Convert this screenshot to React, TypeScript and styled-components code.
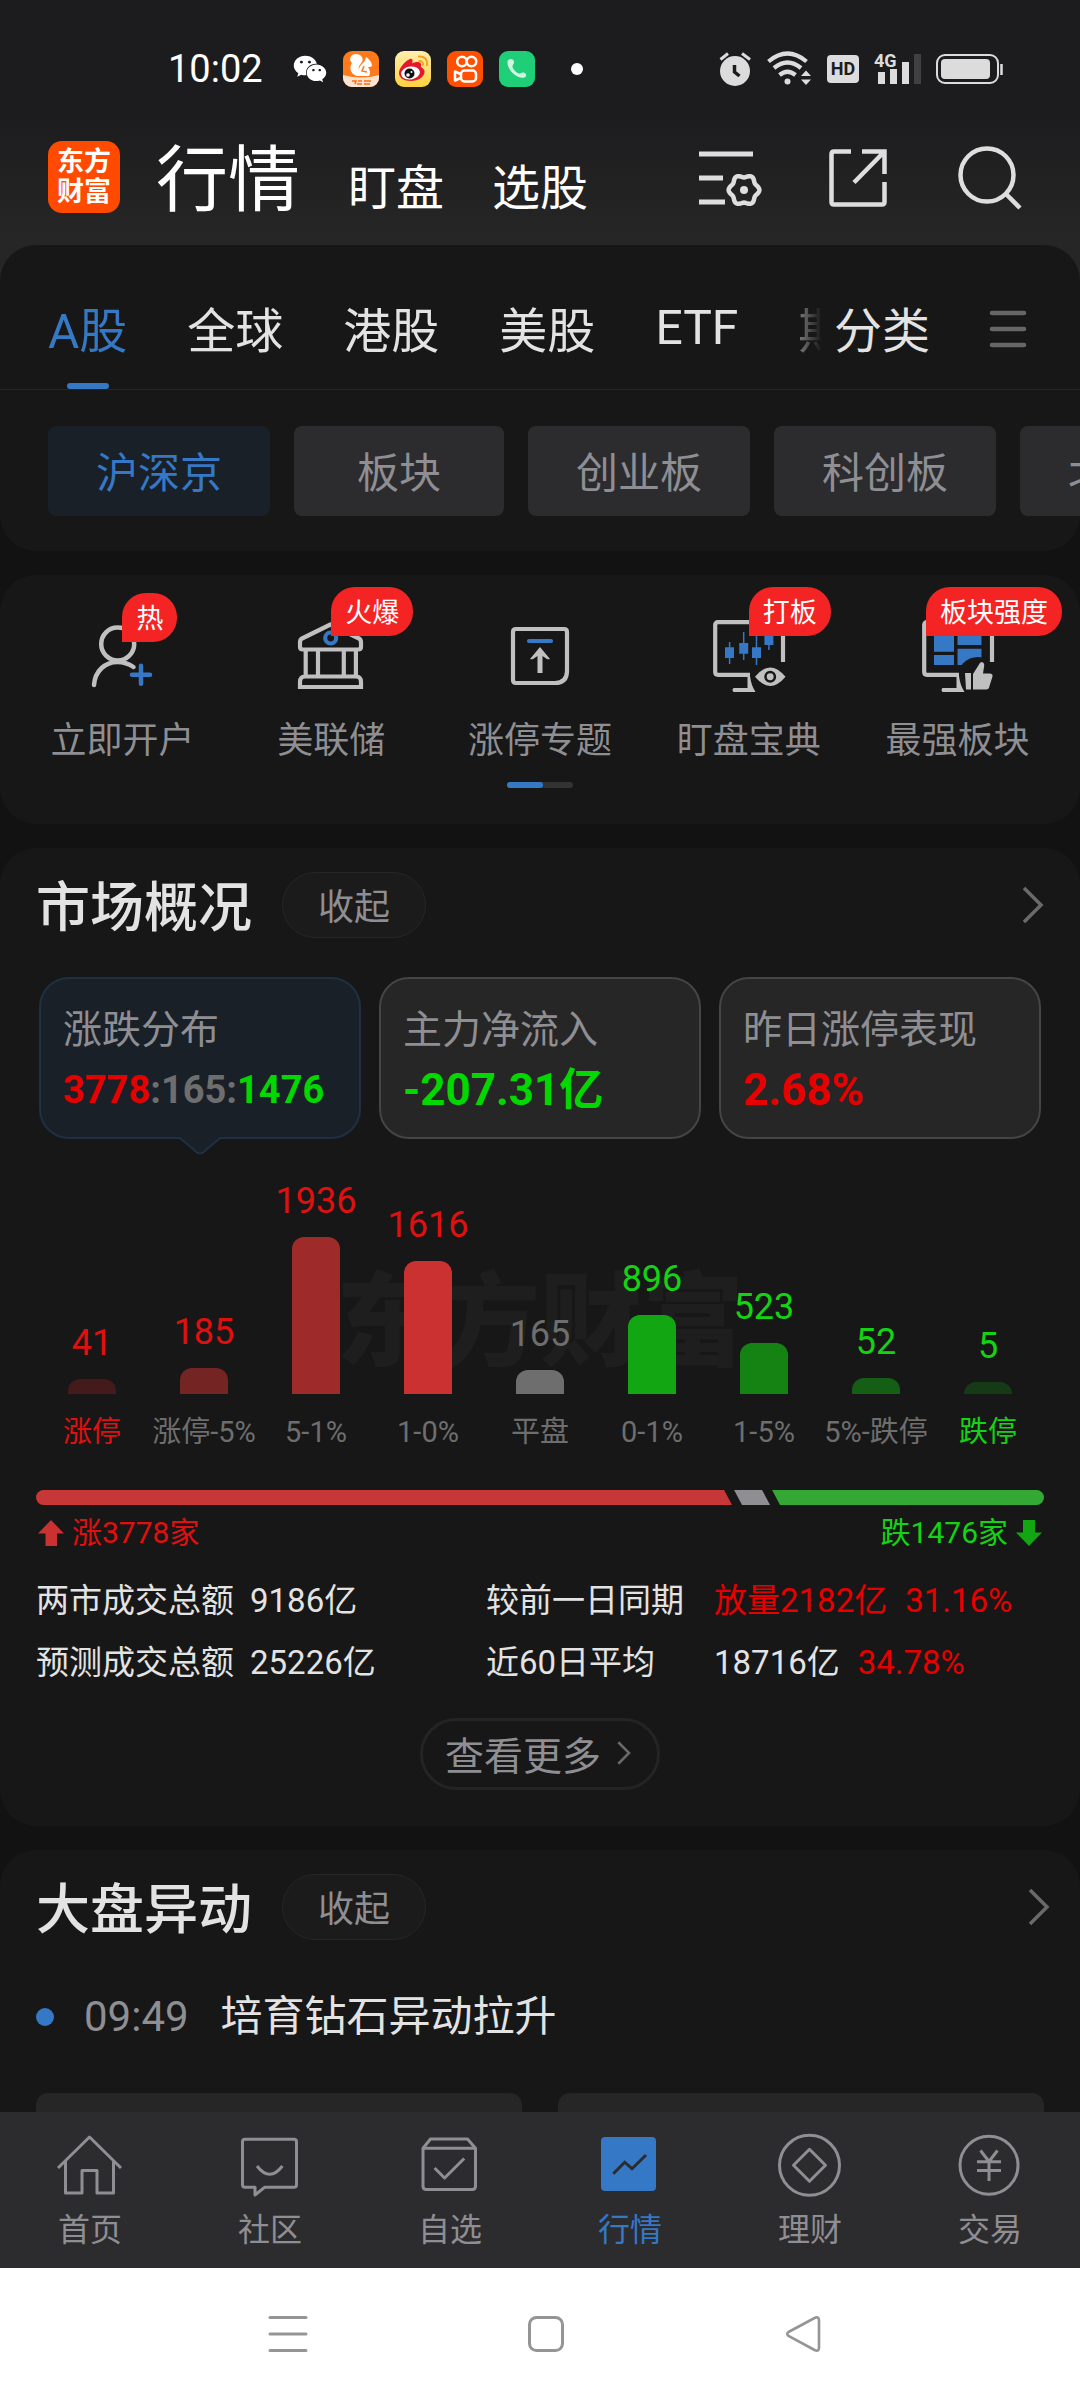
import React from "react";
import styled, { createGlobalStyle } from "styled-components";
import { FaWeixin } from "react-icons/fa";

const color = {
  page: "#121212",
  panel: "#171717",
  raised: "#262626",
  control: "#2c2c2e",
  line: "#262626",
  text: "#e3e3e3",
  muted: "#8e8e93",
  dim: "#6e6e6e",
  blue: "#3478c6",
  up: "#e60000",
  down: "#00d800",
};

const GlobalStyle = createGlobalStyle`
  * { box-sizing: border-box; }
  body {
    margin: 0;
    background: ${color.page};
    color: ${color.text};
    font-family: Roboto, "Noto Sans CJK SC", sans-serif;
  }
  button {
    margin: 0;
    padding: 0;
    border: 0;
    background: none;
    color: inherit;
    font: inherit;
    white-space: nowrap;
    cursor: pointer;
  }
  a { color: inherit; text-decoration: none; }
  svg { display: block; flex: none; overflow: visible; }
  h1, h2, p, dl, dt, dd, ul { margin: 0; padding: 0; list-style: none; font-weight: 400; }
`;

/* ---------- frame ---------- */

const Screen = styled.div`
  display: flex;
  flex-direction: column;
  height: 100vh;
`;

const Scroller = styled.div`
  flex: 1;
  min-height: 0;
  overflow: hidden auto;
  scrollbar-width: none;
`;

const TopArea = styled.div`
  background: linear-gradient(#1c1c1e 0, #1c1c1e 110px, #262626 240px, #262626 300px, ${color.page} 300px);
`;

const Panel = styled.section`
  overflow: hidden;
  margin-bottom: 24px;
  border-radius: 36px;
  background: ${color.panel};
`;

/* ---------- status bar ---------- */

const StatusBar = styled.div`
  display: flex;
  align-items: center;
  justify-content: space-between;
  height: 138px;
  padding: 0 76px 0 168px;
`;

const StatusGroup = styled.div<{ $gap: number }>`
  display: flex;
  align-items: center;
  gap: ${(p) => p.$gap}px;
  color: #dcdcdc;
`;

const Clock = styled.time`
  margin-right: 14px;
  color: #fff;
  font-size: 38px;
  line-height: 40px;
`;

const MoreDot = styled.i`
  width: 12px;
  height: 12px;
  margin-left: 20px;
  border-radius: 50%;
  background: #fff;
`;

const HdMark = styled.span`
  width: 32px;
  border-radius: 4px;
  background: #dcdcdc;
  color: #1c1c1e;
  font-size: 18px;
  font-weight: 700;
  line-height: 28px;
  text-align: center;
`;

/* ---------- title bar ---------- */

const TitleBar = styled.header`
  display: flex;
  align-items: center;
  height: 78px;
  margin-bottom: 29px;
  padding: 0 54px 0 48px;
  color: #fff;
`;

const Logo = styled.div`
  display: grid;
  place-content: center;
  width: 72px;
  height: 72px;
  margin-right: 36px;
  border-radius: 14px;
  background: #ff4a00;
  font-size: 27px;
  font-weight: 700;
  line-height: 30px;
`;

const Titles = styled.nav`
  display: flex;
  flex: 1;
  align-items: baseline;
  gap: 48px;
  padding-top: 16px;
`;

const TitleButton = styled.button<{ $large?: boolean }>`
  font-size: ${(p) => (p.$large ? 72 : 48)}px;
  line-height: 78px;
`;

const Tools = styled.div`
  display: flex;
  gap: 58px;
  color: #dedede;
`;

/* ---------- market tabs ---------- */

const TabRow = styled.div`
  display: flex;
  align-items: center;
  height: 145px;
  padding: 24px 54px 0 48px;
  border-bottom: 1px solid ${color.line};
`;

const TabScroller = styled.div`
  display: flex;
  flex: 1;
  gap: 60px;
  min-width: 0;
  height: 100%;
  overflow: hidden;
  mask-image: linear-gradient(to right, #000 calc(100% - 48px), transparent);
`;

const Tab = styled.button<{ $active?: boolean }>`
  position: relative;
  padding-bottom: 4px;
  color: ${(p) => (p.$active ? color.blue : "inherit")};
  font-size: 48px;

  &::after {
    content: "";
    position: absolute;
    bottom: 0;
    left: calc(50% - 21px);
    width: 42px;
    height: 6px;
    border-radius: 3px;
    background: ${(p) => (p.$active ? color.blue : "transparent")};
  }
`;

const CategoryTab = styled(Tab)`
  margin: 0 60px 0 12px;
`;

const Pills = styled.div`
  display: flex;
  gap: 24px;
  padding: 36px 0 35px 48px;
  overflow: hidden;
`;

const Pill = styled.button<{ $active?: boolean }>`
  flex: none;
  min-width: 210px;
  height: 90px;
  padding: 0 48px 4px;
  border-radius: 8px;
  background: ${(p) => (p.$active ? "#1a2028" : color.control)};
  color: ${(p) => (p.$active ? color.blue : color.muted)};
  font-size: 42px;
`;

/* ---------- shortcuts ---------- */

const Shortcuts = styled.div`
  display: grid;
  grid-template-columns: repeat(5, 1fr);
  padding: 45px 18px 0;
`;

const Shortcut = styled.a`
  position: relative;
  display: flex;
  flex-direction: column;
  align-items: center;
  gap: 25px;
  color: ${color.muted};
  font-size: 36px;
  line-height: 48px;
  white-space: nowrap;
`;

const Badge = styled.span<{ $low?: boolean; $wide?: boolean }>`
  position: absolute;
  top: ${(p) => (p.$low ? -27 : -33)}px;
  ${(p) => (p.$wide ? "right: 0;" : "left: 50%;")}
  padding: 3px 14px 0;
  border-radius: 24px 24px 24px 0;
  background: #f52424;
  color: #fff;
  font-size: 27px;
  line-height: 46px;
`;

const Pager = styled.div`
  width: 66px;
  height: 6px;
  margin: 17px auto 36px;
  border-radius: 3px;
  background: #333;

  &::before {
    content: "";
    display: block;
    width: 36px;
    height: 6px;
    border-radius: 3px;
    background: ${color.blue};
  }
`;

/* ---------- section heading ---------- */

const SectionHead = styled.header<{ $end: number }>`
  display: flex;
  align-items: center;
  height: 66px;
  margin: 24px ${(p) => p.$end}px 0 36px;
`;

const SectionTitle = styled.h2`
  margin-right: 30px;
  padding-top: 8px;
  font-size: 54px;
  font-weight: 500;
  line-height: 66px;
`;

const FoldButton = styled.button`
  width: 144px;
  height: 66px;
  margin-right: auto;
  padding-bottom: 2px;
  border: 1px solid ${color.line};
  border-radius: 33px;
  background: #1b1b1b;
  color: ${color.muted};
  font-size: 36px;
`;

/* ---------- overview cards ---------- */

const Cards = styled.div`
  display: grid;
  grid-template-columns: repeat(3, 1fr);
  gap: 18px;
  margin: 39px 39px 0;
`;

const Card = styled.button<{ $active?: boolean }>`
  position: relative;
  height: 162px;
  padding: 4px 22px 0;
  border: 2px solid ${(p) => (p.$active ? "#1f3044" : "#454547")};
  border-radius: 30px;
  background: ${(p) => (p.$active ? "#1a2028" : color.raised)};
  text-align: left;
`;

const CardArrow = styled.svg`
  position: absolute;
  top: 100%;
  left: calc(50% - 20px);
`;

const CardLabel = styled.span`
  display: block;
  color: ${color.muted};
  font-size: 39px;
  line-height: 60px;
`;

const CardValue = styled.strong<{ $small?: boolean }>`
  display: block;
  font-size: ${(p) => (p.$small ? 38 : 44)}px;
  font-weight: 700;
  line-height: 60px;
`;

const Tone = styled.span<{ $tone: "up" | "down" | "flat" }>`
  color: ${(p) => (p.$tone === "up" ? color.up : p.$tone === "down" ? color.down : color.dim)};
`;

/* ---------- distribution chart ---------- */

const Chart = styled.div`
  position: relative;
  display: grid;
  grid-template-columns: repeat(9, 1fr);
  height: 314px;
  margin: 0 36px;
`;

const Watermark = styled.span`
  position: absolute;
  inset: 124px 0 auto;
  color: #1e1e1e;
  font-size: 102px;
  font-weight: 900;
  line-height: 120px;
  text-align: center;
`;

const Column = styled.div`
  position: relative;
  display: flex;
  flex-direction: column;
  align-items: center;
  justify-content: flex-end;
  white-space: nowrap;
`;

const ColumnValue = styled.span<{ $color: string }>`
  margin-bottom: 15px;
  color: ${(p) => p.$color};
  font-size: 36px;
  line-height: 42px;
`;

const Bar = styled.div<{ $color: string }>`
  width: 48px;
  border-radius: 12px 12px 0 0;
  background: ${(p) => p.$color};
`;

const ColumnLabel = styled.span<{ $color: string }>`
  margin-top: 17px;
  color: ${(p) => p.$color};
  font-size: 29px;
  line-height: 42px;
`;

/* ---------- up / down ratio ---------- */

const Ratio = styled.div`
  display: flex;
  gap: 2px;
  height: 15px;
  margin: 37px 36px 0;
  overflow: hidden;
  border-radius: 8px;
`;

const RatioPart = styled.i<{ $color: string; $shape: string }>`
  min-width: 36px;
  background: ${(p) => p.$color};
  clip-path: polygon(${(p) => p.$shape});
`;

const RatioLegend = styled.div`
  display: flex;
  justify-content: space-between;
  margin: 6px 36px 0;
  font-size: 30px;
  line-height: 44px;
`;

const LegendItem = styled.span<{ $color: string }>`
  display: flex;
  align-items: center;
  gap: 7px;
  color: ${(p) => p.$color};
`;

/* ---------- turnover figures ---------- */

const Figures = styled.dl`
  display: grid;
  grid-template-columns: 214fr 236fr 228fr 330fr;
  margin: 15px 36px 0;
  font-size: 33px;
  line-height: 62px;
  white-space: nowrap;
`;

const FigureValue = styled.dd`
  display: flex;
  gap: 18px;
`;

const MoreButton = styled.button`
  display: flex;
  align-items: center;
  justify-content: center;
  gap: 16px;
  width: 240px;
  height: 72px;
  margin: 24px auto 36px;
  padding: 0 4px 3px 0;
  border: 3px solid #242424;
  border-radius: 36px;
  color: ${color.muted};
  font-size: 39px;
`;

/* ---------- market moves ---------- */

const NewsLine = styled.p`
  display: flex;
  align-items: center;
  margin: 45px 36px 0;
  font-size: 42px;
  line-height: 64px;
`;

const NewsDot = styled.i`
  width: 18px;
  height: 18px;
  margin-right: 30px;
  border-radius: 50%;
  background: ${color.blue};
`;

const NewsTime = styled.time`
  margin-right: 32px;
  color: ${color.muted};
`;

const NewsCards = styled.div`
  display: grid;
  grid-template-columns: 1fr 1fr;
  gap: 36px;
  margin: 44px 36px 36px;
`;

const NewsCard = styled.div`
  height: 150px;
  border-radius: 12px;
  background: ${color.raised};
`;

/* ---------- bottom bars ---------- */

const BottomNav = styled.nav`
  display: grid;
  flex: none;
  grid-template-columns: repeat(6, 1fr);
  height: 156px;
  padding-top: 17px;
  background: ${color.control};
`;

const BottomLink = styled.a<{ $active?: boolean }>`
  display: flex;
  flex-direction: column;
  align-items: center;
  gap: 7px;
  color: ${(p) => (p.$active ? color.blue : color.muted)};
  font-size: 32px;
  line-height: 44px;
`;

const SystemNav = styled.div`
  display: flex;
  flex: none;
  align-items: center;
  justify-content: center;
  gap: 216px;
  height: 132px;
  padding-left: 12px;
  background: #fff;
  color: #959595;
`;

/* ---------- icons ---------- */

const stroke = (width: number) => ({
  fill: "none",
  stroke: "currentColor",
  strokeWidth: width,
});

const AlarmIcon = () => (
  <svg width="32" height="36" viewBox="60 21 32 36">
    <circle cx="76" cy="41" r="15" fill="currentColor" />
    <path d="M61.5 29.5 69 23.5M83 23.5l8 6" {...stroke(3)} />
    <path d="M75.5 35v7l5 4" fill="none" stroke="#1c1c1e" strokeWidth="3.5" />
  </svg>
);

const WifiIcon = () => (
  <svg width="46" height="36" viewBox="107 21 46 36">
    <path d="M109.5 31.5q19-16 38 0M115 38q13.500-11 27 0M120.500 45q8-6.500 16 0" {...stroke(4.2)} />
    <circle cx="128.500" cy="51.500" r="3" fill="currentColor" />
    <path d="m142 46 5-5.500 5 5.500zM142 49.500h10l-5 5.500z" fill="currentColor" />
  </svg>
);

const SignalIcon = () => (
  <svg width="47" height="36" viewBox="213 21 47 36">
    <path d="M217 42h7v12h-7zM229 39h7v15h-7zM241 32h7v22h-7z" fill="currentColor" />
    <path d="M253 24h7v30h-7z" fill="#404042" />
    <text x="213" y="37" fontSize="18" fontWeight="700" fill="currentColor">
      4G
    </text>
  </svg>
);

const BatteryIcon = () => (
  <svg width="68" height="36" viewBox="276 21 68 36">
    <rect x="277" y="25" width="61" height="28" rx="8" {...stroke(2)} />
    <rect x="281" y="29" width="49" height="20" rx="4" fill="currentColor" />
    <path d="M341.500 34v11" {...stroke(2.5)} />
  </svg>
);

const BrowserAppIcon = () => (
  <svg width="36" height="36" viewBox="0 0 36 36">
    <rect width="36" height="36" rx="9" fill="#ff7a1a" />
    <path d="M0 24q18 5 36 0v3a9 9 0 0 1-9 9H9a9 9 0 0 1-9-9z" fill="#ffe2cf" />
    <path d="M9 12C5 8 8 3 13 3s8 4 6 8c-2 3-5 5-2 10 2 3 5 3 6 4H14C7 23 6 16 9 12z" fill="#fff" />
    <path d="M19 13c2-2 3-3 4-7 3 2 5 4 6 8 0 2-2 2-4 2 2 3 3 6 1 9h-8c-4-4-2-9 1-12z" fill="#fff" />
    <path d="m21 15-2 5 5 1" fill="none" stroke="#ff7a1a" strokeWidth="1.500" />
    <path d="M9 30h4l-1 3M15 30h4M14 33h5M21 30h7M21 33h6" stroke="#ff6a10" strokeWidth="1.500" fill="none" />
  </svg>
);

const WeiboAppIcon = () => (
  <svg width="36" height="36" viewBox="0 0 36 36">
    <defs>
      <linearGradient id="weibo" x2="0" y2="1">
        <stop stopColor="#ffeeb0" />
        <stop offset="1" stopColor="#ffd23c" />
      </linearGradient>
    </defs>
    <rect width="36" height="36" rx="9" fill="url(#weibo)" />
    <path d="M4 22C4 17 10 10 15 8c3-1 3 3 2 4.500 4-2.500 10-2 9 2-1 2 3 2.500 3.500 5.500C30 26 23 30 16 30S4 27 4 22z" fill="#e6162d" />
    <ellipse cx="15.500" cy="22" rx="9.500" ry="6.500" fill="#fff" transform="rotate(-8 15.500 22)" />
    <circle cx="14.500" cy="22.500" r="5" fill="#111" />
    <circle cx="13" cy="24" r="1.800" fill="#fff" />
    <circle cx="16.500" cy="21" r="1" fill="#fff" />
    <path d="M23 5.500q10-1 9 9.500M23.500 10q5-.5 4.500 4.500" fill="none" stroke="#f5a31a" strokeWidth="2" />
  </svg>
);

const VideoAppIcon = () => (
  <svg width="36" height="36" viewBox="0 0 36 36">
    <rect width="36" height="36" rx="9" fill="#ff4f00" />
    <g fill="none" stroke="#fff" strokeWidth="2.500" strokeLinejoin="round">
      <circle cx="15" cy="10.500" r="4.800" />
      <circle cx="24.500" cy="10.500" r="4.800" />
      <rect x="14" y="19.500" width="15" height="11" rx="3.500" />
      <path d="m13.500 23-5.500-2.500v9l5.500-2.500" />
    </g>
  </svg>
);

const PhoneAppIcon = () => (
  <svg width="36" height="36" viewBox="0 0 36 36">
    <rect width="36" height="36" rx="9" fill="#1fcf78" />
    <path
      d="M10 8.500c2-1.500 5 0 5 2.500s-2 3-1.500 5c1 3 3 5 6 6.500 2 .5 3-1.500 5-1 3 .5 3.500 4 1 5C18 28.500 8 19 8.500 11c0-1 .5-2 1.500-2.500z"
      fill="#d2f5e2"
    />
  </svg>
);

const gearPath =
  Array.from({ length: 73 }, (_, i) => {
    const angle = (i * Math.PI) / 36;
    const radius = 14 + 1.4 * Math.cos(6 * angle);
    const x = 84 + radius * Math.cos(angle);
    const y = 159 + radius * Math.sin(angle);
    return `${i ? "L" : "M"}${x.toFixed(2)} ${y.toFixed(2)}`;
  }).join("") + "z";

const ListSettingsIcon = () => (
  <svg width="72" height="72" viewBox="34 110 72 72">
    <path d="M39 123h54M39 147h24M39 171h26" {...stroke(5)} />
    <path d={gearPath} {...stroke(4.5)} />
    <circle cx="84" cy="159" r="4" fill="currentColor" />
  </svg>
);

const ShareIcon = () => (
  <svg width="72" height="72" viewBox="164 110 72 72">
    <path d="M191 120.500h-17q-2.500 0-2.500 2.500v48q0 2.500 2.500 2.500h48q2.500 0 2.500-2.500v-20" {...stroke(4.5)} />
    <path d="M202 120.500h22.500V143M224 121l-30 30.500" {...stroke(4.5)} />
  </svg>
);

const SearchIcon = () => (
  <svg width="72" height="72" viewBox="294 110 72 72">
    <circle cx="327" cy="144" r="26.500" {...stroke(4.5)} />
    <path d="m346 163 14 14" {...stroke(4.5)} />
  </svg>
);

const CategoryIcon = () => (
  <svg width="36" height="38" viewBox="0 0 36 38" color="#666">
    <path d="M2 3h32M2 19h32M2 35h32" {...stroke(4.5)} strokeLinecap="round" />
  </svg>
);

const Chevron = ({ small }: { small?: boolean }) => (
  <svg width={small ? 14 : 22} height={small ? 24 : 38} viewBox="0 0 22 38" color="#6a6a6c">
    <path d="m2 2 17 17L2 36" {...stroke(small ? 4 : 3.5)} />
  </svg>
);

const light = "#c0c0c0";

const OpenAccountIcon = () => (
  <svg width="72" height="72" viewBox="0 0 72 72" color={light}>
    <circle cx="31.700" cy="24" r="16.500" {...stroke(4.5)} />
    <path d="M8 65c1-14 11-23 23.500-23 6 0 11.500 2 16 5" {...stroke(4.5)} strokeLinecap="round" />
    <path d="M46 54.700h18M55 45.700v18" {...stroke(4.5)} stroke={color.blue} strokeLinecap="round" />
  </svg>
);

const BankIcon = () => (
  <svg width="72" height="72" viewBox="0 0 72 72" color={light}>
    <g {...stroke(4.2)}>
      <path d="M35.500 4.500 7 18.500q-2 1-2 4V27q0 2.500 3 2.500h55q3 0 3-2.500v-4.500q0-3-2-4z" />
      <path d="M10.700 30v26M23 30v26M48.800 30v26M60.900 30v26" />
      <path d="M5 67v-5q0-5.500 5-5.500h51q5 0 5 5.500v5z" />
    </g>
    <circle cx="35.700" cy="18" r="5.500" {...stroke(4.2)} stroke={color.blue} />
  </svg>
);

const LimitUpIcon = () => (
  <svg width="72" height="72" viewBox="0 0 72 72" color={light}>
    <path d="M12 9h48q3 0 3 3v39q0 12-12 12H12q-3 0-3-3V12q0-3 3-3z" {...stroke(4.2)} />
    <path d="M25 21h22" {...stroke(4.2)} stroke={color.blue} strokeLinecap="round" />
    <path d="M36 27 46 39q-1.500.5-3 0l-4.500-3v17h-5V36L29 39q-1.500.5-3 0z" fill="currentColor" />
  </svg>
);

const MonitorFrame = () => (
  <>
    <path d="M70 42V5q0-2.800-3-2.800H5Q2.200 2.200 2.200 5v47q0 2.800 2.800 2.800h32" {...stroke(4.2)} />
    <path d="M34.500 56h2.500q1 9 5.500 16H20.500q-2-2 0-4H34.500z" fill="currentColor" />
  </>
);

const WatchGuideIcon = () => (
  <svg width="72" height="72" viewBox="0 0 72 72" color={light}>
    <MonitorFrame />
    <path d="M16.600 22v22M30.700 12v28M43.500 16v29M55.900 8v22" {...stroke(1.5)} stroke={color.blue} />
    <path d="M12 27.300h9V38h-9zM26.200 23h9v10.700h-9zM39 27.300h9V38h-9zM51.400 14h9v11h-9z" fill={color.blue} />
    <path d="M42 56.700q15-18.500 30.500 0-15.500 18.500-30.500 0z" fill="currentColor" />
    <circle cx="57.200" cy="56.700" r="4.700" fill="currentColor" stroke={color.panel} strokeWidth="2.500" />
  </svg>
);

const StrongSectorIcon = () => (
  <svg width="72" height="72" viewBox="0 0 72 72" color={light}>
    <path
      d="M12 12h20v19.700H12zM35.500 12h24v13h-24zM12 35h20v10H12zM35.500 28.700h24V45h-24z"
      fill={color.blue}
    />
    <circle cx="56" cy="58" r="21" fill={color.panel} />
    <MonitorFrame />
    <path
      d="M43 53h6v16.500h-5zM51 69.500V54l6-9.500q.5-2.500 3-2.500 3 1 2 5l-1 6.500h6.500q3.500 0 3 3L67.500 66q-.5 3.500-3.500 3.500z"
      fill="currentColor"
    />
  </svg>
);

const HomeIcon = () => (
  <svg width="72" height="72" viewBox="0 0 72 72">
    <path d="m4 39 31.500-31L67 39M11.500 32.500V64H28V41.500h15V64h16.500V32.500" {...stroke(3)} strokeLinejoin="round" />
  </svg>
);

const CommunityIcon = () => (
  <svg width="72" height="72" viewBox="0 0 72 72">
    <path
      d="M11 10.300h49q2.500 0 2.500 2.500v43q0 2.500-2.500 2.500H30.500L21 66v-7.700H11q-2.500 0-2.500-2.500v-43q0-2.500 2.500-2.500z"
      {...stroke(3)}
      strokeLinejoin="round"
    />
    <path d="M23 37q12.700 16.500 25.400 0" {...stroke(3)} />
  </svg>
);

const WatchlistIcon = () => (
  <svg width="72" height="72" viewBox="0 0 72 72">
    <path d="M9 19.300 16.500 10h37l8 9.300v38q0 3.200-3.200 3.200H12.200Q9 60.500 9 57.300zH61.500M20.600 39l10 10 19.600-19.500" {...stroke(3)} strokeLinejoin="round" />
  </svg>
);

const MarketIcon = () => (
  <svg width="72" height="72" viewBox="0 0 72 72">
    <rect x="7" y="8" width="55" height="54" rx="4" fill="currentColor" />
    <path d="m19.300 44.700 11.400-11.500 7.300 6.500L52 26" fill="none" stroke={color.control} strokeWidth="3" />
  </svg>
);

const WealthIcon = () => (
  <svg width="72" height="72" viewBox="0 0 72 72">
    <circle cx="35.500" cy="36.300" r="30" {...stroke(3)} />
    <path d="m35.500 20.300 16 16-16 16-16-16z" {...stroke(3)} strokeLinejoin="round" />
  </svg>
);

const TradeIcon = () => (
  <svg width="72" height="72" viewBox="0 0 72 72">
    <circle cx="35" cy="36.300" r="29" {...stroke(3)} />
    <path d="m26.500 21.500 8.500 11 8.500-11M35 32v20M23 32.700h24M23 41.500h24" {...stroke(3)} />
  </svg>
);

/* ---------- data ---------- */

const tabs = ["A股", "全球", "港股", "美股", "ETF", "期货"];
const pills = ["沪深京", "板块", "创业板", "科创板", "北交所"];

const shortcuts = [
  { name: "立即开户", badge: "热", icon: <OpenAccountIcon /> },
  { name: "美联储", badge: "火爆", icon: <BankIcon /> },
  { name: "涨停专题", badge: "", icon: <LimitUpIcon /> },
  { name: "盯盘宝典", badge: "打板", icon: <WatchGuideIcon /> },
  { name: "最强板块", badge: "板块强度", icon: <StrongSectorIcon /> },
];

const red = "#e01010";
const green = "#14d214";

const columns = [
  { label: "涨停", value: 41, height: 15, bar: "#451a1a", tone: red, labelTone: red },
  { label: "涨停-5%", value: 185, height: 26, bar: "#752424", tone: red, labelTone: color.dim },
  { label: "5-1%", value: 1936, height: 157, bar: "#9f2a2a", tone: red, labelTone: color.dim },
  { label: "1-0%", value: 1616, height: 133, bar: "#cc3131", tone: red, labelTone: color.dim },
  { label: "平盘", value: 165, height: 24, bar: "#6e6e6e", tone: color.dim, labelTone: color.dim },
  { label: "0-1%", value: 896, height: 79, bar: "#12a712", tone: green, labelTone: color.dim },
  { label: "1-5%", value: 523, height: 51, bar: "#148314", tone: green, labelTone: color.dim },
  { label: "5%-跌停", value: 52, height: 16, bar: "#155e15", tone: green, labelTone: color.dim },
  { label: "跌停", value: 5, height: 12, bar: "#163a16", tone: green, labelTone: green },
];

const bottomItems = [
  { name: "首页", icon: <HomeIcon /> },
  { name: "社区", icon: <CommunityIcon /> },
  { name: "自选", icon: <WatchlistIcon /> },
  { name: "行情", icon: <MarketIcon />, active: true },
  { name: "理财", icon: <WealthIcon /> },
  { name: "交易", icon: <TradeIcon /> },
];

export default function App() {
  return (
    <>
      <GlobalStyle />
      <Screen>
        <Scroller>
          <TopArea>
            <StatusBar>
              <StatusGroup $gap={16}>
                <Clock>10:02</Clock>
                <FaWeixin size={34} color="#fff" />
                <BrowserAppIcon />
                <WeiboAppIcon />
                <VideoAppIcon />
                <PhoneAppIcon />
                <MoreDot />
              </StatusGroup>
              <StatusGroup $gap={15}>
                <AlarmIcon />
                <WifiIcon />
                <HdMark>HD</HdMark>
                <SignalIcon />
                <BatteryIcon />
              </StatusGroup>
            </StatusBar>

            <TitleBar>
              <Logo>
                <span>东方</span>
                <span>财富</span>
              </Logo>
              <Titles>
                <TitleButton $large>行情</TitleButton>
                <TitleButton>盯盘</TitleButton>
                <TitleButton>选股</TitleButton>
              </Titles>
              <Tools>
                <button aria-label="设置">
                  <ListSettingsIcon />
                </button>
                <button aria-label="分享">
                  <ShareIcon />
                </button>
                <button aria-label="搜索">
                  <SearchIcon />
                </button>
              </Tools>
            </TitleBar>

            <Panel>
              <TabRow>
                <TabScroller>
                  {tabs.map((name, i) => (
                    <Tab key={name} $active={i === 0}>
                      {name}
                    </Tab>
                  ))}
                </TabScroller>
                <CategoryTab>分类</CategoryTab>
                <button aria-label="全部分类">
                  <CategoryIcon />
                </button>
              </TabRow>
              <Pills>
                {pills.map((name, i) => (
                  <Pill key={name} $active={i === 0}>
                    {name}
                  </Pill>
                ))}
              </Pills>
            </Panel>
          </TopArea>

          <Panel>
            <Shortcuts>
              {shortcuts.map((s) => (
                <Shortcut key={s.name} href="#">
                  {s.icon}
                  {s.name}
                  {s.badge && (
                    <Badge $low={s.badge.length === 1} $wide={s.badge.length > 2}>
                      {s.badge}
                    </Badge>
                  )}
                </Shortcut>
              ))}
            </Shortcuts>
            <Pager />
          </Panel>

          <Panel>
            <SectionHead $end={36}>
              <SectionTitle>市场概况</SectionTitle>
              <FoldButton>收起</FoldButton>
              <Chevron />
            </SectionHead>

            <Cards>
              <Card $active>
                <CardLabel>涨跌分布</CardLabel>
                <CardValue $small>
                  <Tone $tone="up">3778</Tone>
                  <Tone $tone="flat">:165:</Tone>
                  <Tone $tone="down">1476</Tone>
                </CardValue>
                <CardArrow width="40" height="18" viewBox="0 0 40 18">
                  <path d="M0 0 17 14.500q3 2 6 0L40 0z" fill="#1a2028" />
                  <path d="M0 1 17 15.500q3 2 6 0L40 1" fill="none" stroke="#1f3044" strokeWidth="2" />
                </CardArrow>
              </Card>
              <Card>
                <CardLabel>主力净流入</CardLabel>
                <CardValue>
                  <Tone $tone="down">-207.31亿</Tone>
                </CardValue>
              </Card>
              <Card>
                <CardLabel>昨日涨停表现</CardLabel>
                <CardValue>
                  <Tone $tone="up">2.68%</Tone>
                </CardValue>
              </Card>
            </Cards>

            <Chart>
              <Watermark aria-hidden="true">东方财富</Watermark>
              {columns.map((c) => (
                <Column key={c.label}>
                  <ColumnValue $color={c.tone}>{c.value}</ColumnValue>
                  <Bar $color={c.bar} style={{ height: c.height }} />
                  <ColumnLabel $color={c.labelTone}>{c.label}</ColumnLabel>
                </Column>
              ))}
            </Chart>

            <Ratio>
              <RatioPart
                $color="#c83737"
                $shape="0 0, calc(100% - 8px) 0, 100% 100%, 0 100%"
                style={{ flex: 3778 }}
              />
              <RatioPart
                $color="#8e8e93"
                $shape="0 0, calc(100% - 8px) 0, 100% 100%, 8px 100%"
                style={{ flex: 165 }}
              />
              <RatioPart $color="#34a834" $shape="0 0, 100% 0, 100% 100%, 8px 100%" style={{ flex: 1476 }} />
            </Ratio>
            <RatioLegend>
              <LegendItem $color={red}>
                <svg width="29" height="28" viewBox="0 0 29 28">
                  <path d="M15 1 28 14.500H21V27H9.500V14.500H2z" fill="#cc3131" />
                </svg>
                涨3778家
              </LegendItem>
              <LegendItem $color={green}>
                跌1476家
                <svg width="29" height="28" viewBox="0 0 29 28">
                  <path d="M14 27 1 13.500H8V1h12v12.500h7z" fill="#12a712" />
                </svg>
              </LegendItem>
            </RatioLegend>

            <Figures>
              <dt>两市成交总额</dt>
              <FigureValue>9186亿</FigureValue>
              <dt>较前一日同期</dt>
              <FigureValue>
                <Tone $tone="up">放量2182亿</Tone>
                <Tone $tone="up">31.16%</Tone>
              </FigureValue>
              <dt>预测成交总额</dt>
              <FigureValue>25226亿</FigureValue>
              <dt>近60日平均</dt>
              <FigureValue>
                <span>18716亿</span>
                <Tone $tone="up">34.78%</Tone>
              </FigureValue>
            </Figures>

            <MoreButton>
              查看更多
              <Chevron small />
            </MoreButton>
          </Panel>

          <Panel>
            <SectionHead $end={30}>
              <SectionTitle>大盘异动</SectionTitle>
              <FoldButton>收起</FoldButton>
              <Chevron />
            </SectionHead>
            <NewsLine>
              <NewsDot />
              <NewsTime>09:49</NewsTime>
              培育钻石异动拉升
            </NewsLine>
            <NewsCards>
              <NewsCard />
              <NewsCard />
            </NewsCards>
          </Panel>
        </Scroller>

        <BottomNav>
          {bottomItems.map((item) => (
            <BottomLink key={item.name} href="#" $active={item.active}>
              {item.icon}
              {item.name}
            </BottomLink>
          ))}
        </BottomNav>

        <SystemNav>
          <button aria-label="最近任务">
            <svg width="42" height="42" viewBox="0 0 42 42">
              <path d="M3 4.500h36M3 21h36M3 37.500h36" {...stroke(3)} strokeLinecap="round" />
            </svg>
          </button>
          <button aria-label="主屏幕">
            <svg width="42" height="42" viewBox="0 0 42 42">
              <rect x="4.500" y="4.500" width="33" height="33" rx="7" {...stroke(3)} />
            </svg>
          </button>
          <button aria-label="返回">
            <svg width="42" height="42" viewBox="0 0 42 42">
              <path d="M5.500 19 32 4.800q4-1.500 4 2.500v27.400q0 4-4 2.500L5.500 23q-2.500-2 0-4z" {...stroke(2.6)} />
            </svg>
          </button>
        </SystemNav>
      </Screen>
    </>
  );
}
